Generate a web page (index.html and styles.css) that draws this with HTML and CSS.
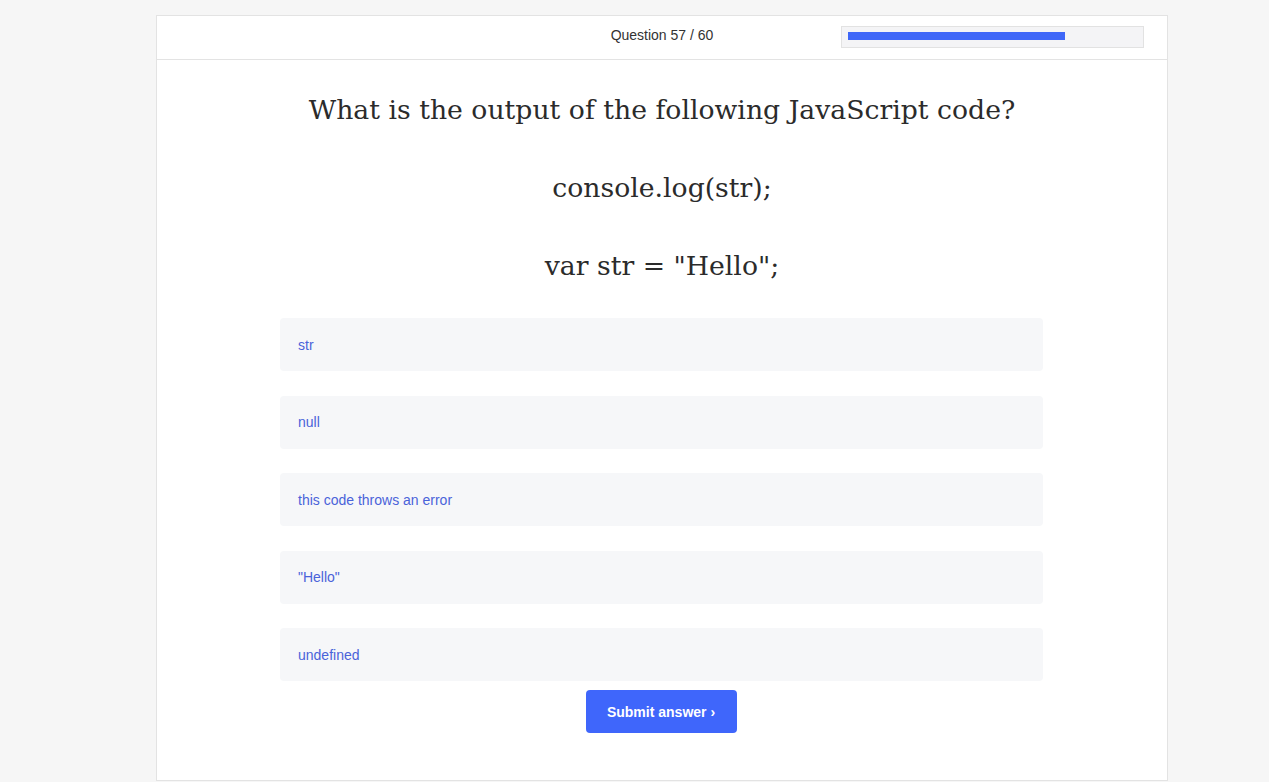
FILE: index.html
```html
<!DOCTYPE html>
<html>
<head>
<meta charset="utf-8">
<link rel="stylesheet" href="styles.css">
</head>
<body>
<div class="card">
  <header class="topbar">
    <div class="counter">Question 57 / 60</div>
    <div class="progress"><div class="progress-fill" style="width:217px"></div></div>
  </header>
  <main class="body">
    <div class="question">
      <p>What is the output of the following JavaScript code?</p>
      <p>console.log(str);</p>
      <p>var str = "Hello";</p>
    </div>
    <div class="options">
      <div class="option">str</div>
      <div class="option">null</div>
      <div class="option">this code throws an error</div>
      <div class="option">"Hello"</div>
      <div class="option">undefined</div>
    </div>
    <button class="submit">Submit answer ›</button>
  </main>
</div>
</body>
</html>
```
FILE: styles.css
```css
html, body {
  margin: 0;
  padding: 0;
  background: #f6f6f6;
}
body {
  padding-top: 15px;
  font-family: "Liberation Sans", Arial, sans-serif;
}
.card {
  margin-left: 156px;
  width: 1010px;
  height: 764px;
  background: #fff;
  border: 1px solid #e3e3e3;
  box-sizing: content-box;
}
.topbar {
  height: 43px;
  border-bottom: 1px solid #e3e3e3;
  display: flex;
  align-items: flex-start;
  position: relative;
}
.counter {
  position: absolute;
  left: 0;
  right: 0;
  text-align: center;
  font-size: 14px;
  color: #333;
  top: 11px;
}
.progress {
  margin-left: 684px;
  margin-top: 10px;
  width: 303px;
  height: 22px;
  background: #f4f4f6;
  border: 1px solid #e2e2e2;
  padding: 5px 6px;
  box-sizing: border-box;
  position: relative;
  z-index: 1;
}
.progress-fill {
  height: 8px;
  background: #3f67f8;
}
.body {
  display: flex;
  flex-direction: column;
  align-items: center;
}
.question {
  text-align: center;
  font-family: "DejaVu Serif", Georgia, serif;
  font-size: 26.7px;
  color: #2b2b2b;
  padding-top: 33px;
}
.question p {
  margin: 0 0 44px 0;
  line-height: 34px;
}
.options {
  width: 763px;
  display: flex;
  flex-direction: column;
  gap: 24.5px;
  margin-top: -9px;
  margin-left: -1px;
}
.option {
  height: 53px;
  background: #f6f7f9;
  border-radius: 4px;
  padding: 0 18px;
  display: flex;
  align-items: center;
  font-size: 14px;
  color: #4a63d9;
}
.submit {
  margin-top: 9px;
  margin-left: -2px;
  width: 151px;
  height: 43px;
  background: #3f66fb;
  color: #fff;
  border: none;
  border-radius: 4px;
  font-family: "Liberation Sans", Arial, sans-serif;
  font-weight: bold;
  font-size: 14px;
}
```
